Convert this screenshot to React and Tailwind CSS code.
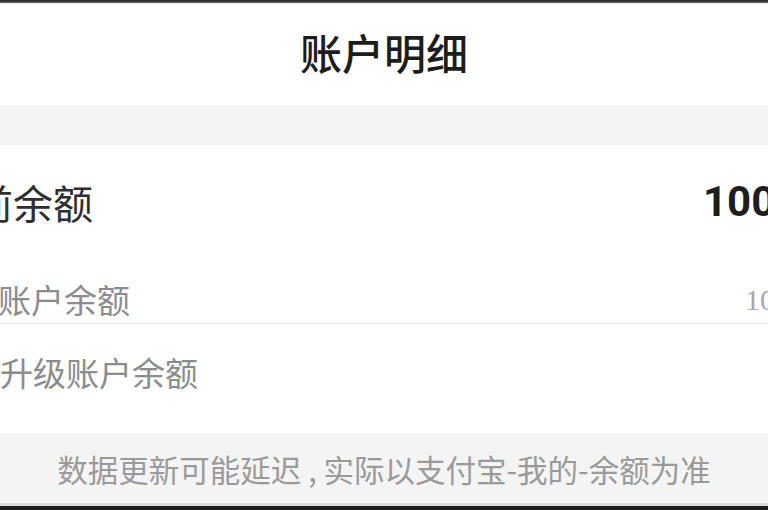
export default function App() {
  const cjk = { fontFamily: '"Noto Sans CJK SC", "Noto Sans", sans-serif' };
  return (
    <div className="w-[768px] h-[510px] overflow-hidden bg-white flex flex-col" style={cjk}>
      <div className="h-[3px] shrink-0 bg-gradient-to-b from-[#1e1e1e] to-[#6a6a6a]" />
      <div className="h-[1px] shrink-0 bg-[#f0f0f0]" />
      <div className="h-[101px] shrink-0 bg-white flex items-center justify-center pb-[6px]">
        <h1 className="text-[42px] leading-none font-medium text-[#1c1c1c]">账户明细</h1>
      </div>
      <div className="h-[40px] shrink-0 bg-[#f4f4f4]" />
      <div className="h-[288px] shrink-0 bg-white flex flex-col">
        <div className="h-[115px] shrink-0 flex items-center pb-[2px]">
          <span className="ml-[-67px] text-[40px] leading-none text-[#2e2e2e] whitespace-nowrap">当前余额</span>
          <div className="flex-1" />
          <div className="w-[65px] shrink-0 whitespace-nowrap">
            <span className="text-[42px] leading-none font-bold text-[#1e1e1e]" style={{ fontFamily: 'Roboto, "Liberation Sans", sans-serif' }}>100.00</span>
          </div>
        </div>
        <div className="h-[63px] shrink-0 flex items-center pt-[16px]">
          <span className="ml-[-2px] text-[33px] leading-none text-[#8c8c8c] whitespace-nowrap">账户余额</span>
          <div className="flex-1" />
          <div className="w-[23px] shrink-0 whitespace-nowrap">
            <span className="text-[30px] leading-none text-[#a8a8a8]" style={{ fontFamily: '"Liberation Serif", serif' }}>100.00</span>
          </div>
        </div>
        <div className="h-[1px] shrink-0 bg-[#e6e6e6]" />
        <div className="flex-1 flex items-center pb-[12px]">
          <span className="text-[33px] leading-none text-[#8c8c8c] whitespace-nowrap">升级账户余额</span>
        </div>
      </div>
      <div className="h-[70px] shrink-0 bg-[#f4f4f4] flex items-center justify-center pt-[2px]">
        <p className="text-[30.5px] leading-none text-[#9a9a9a] whitespace-nowrap">数据更新可能延迟 , 实际以支付宝-我的-余额为准</p>
      </div>
      <div className="h-[3px] shrink-0 bg-[#dcdcdc]" />
      <div className="flex-1 bg-[#1e1e1e]" />
    </div>
  );
}
